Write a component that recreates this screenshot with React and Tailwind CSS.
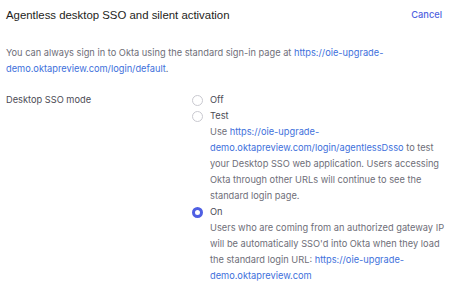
import React from 'react';

const Radio = ({ checked }) => (
    <span
        className={`w-[11px] h-[11px] rounded-full shrink-0 bg-white ${
            checked ? 'border-[3px] border-[#4f5fe3]' : 'border border-[#c9c9d0]'
        }`}
    />
);

const Option = ({ label, checked, children }) => (
    <div>
        <div className="flex items-center h-4">
            <div className="w-[26px] flex items-center pl-[8px]">
                <Radio checked={checked} />
            </div>
            <span className="text-[#4b4b55]">{label}</span>
        </div>
        {children && <div className="pl-[26px] text-[#6e6e78]">{children}</div>}
    </div>
);

const Link = ({ children }) => <span className="text-[#3d6fdb]">{children}</span>;

export default function App() {
    return (
        <div className="w-[456px] h-[284px] bg-white overflow-hidden text-[9.25px] leading-4 font-[family-name:Inter,'Noto_Sans',sans-serif]">
            {/* Header */}
            <div className="flex items-center justify-between pl-[6px] pr-[14px] pt-[5px] h-[24px]">
                <h1 className="text-[11.4px] text-[#1d1d21] font-normal font-[family-name:'Liberation_Sans',Arial,sans-serif]">
                    Agentless desktop SSO and silent activation
                </h1>
                <button className="text-[9.25px] font-medium text-[#4f62e0]">Cancel</button>
            </div>

            {/* Intro */}
            <p className="pl-[6px] pr-[50px] mt-[21px] text-[#6e6e78]">
                You can always sign in to Okta using the standard sign-in page at{' '}
                <Link>https://oie-upgrade-demo.oktapreview.com/login/default</Link>.
            </p>

            {/* Desktop SSO mode */}
            <div className="flex mt-[15px] pl-[6px]">
                <div className="w-[178px] text-[#4b4b55]">Desktop SSO mode</div>
                <div className="w-[264px]">
                    <Option label="Off" />
                    <Option label="Test">
                        Use <Link>https://oie-upgrade-demo.oktapreview.com/login/agentlessDsso</Link> to test
                        your Desktop SSO web application. Users accessing Okta through other URLs will continue
                        to see the standard login page.
                    </Option>
                    <Option label="On" checked>
                        Users who are coming from an authorized gateway IP will be automatically SSO'd into Okta
                        when they load the standard login URL:{' '}
                        <Link>https://oie-upgrade-demo.oktapreview.com</Link>
                    </Option>
                </div>
            </div>
        </div>
    );
}
